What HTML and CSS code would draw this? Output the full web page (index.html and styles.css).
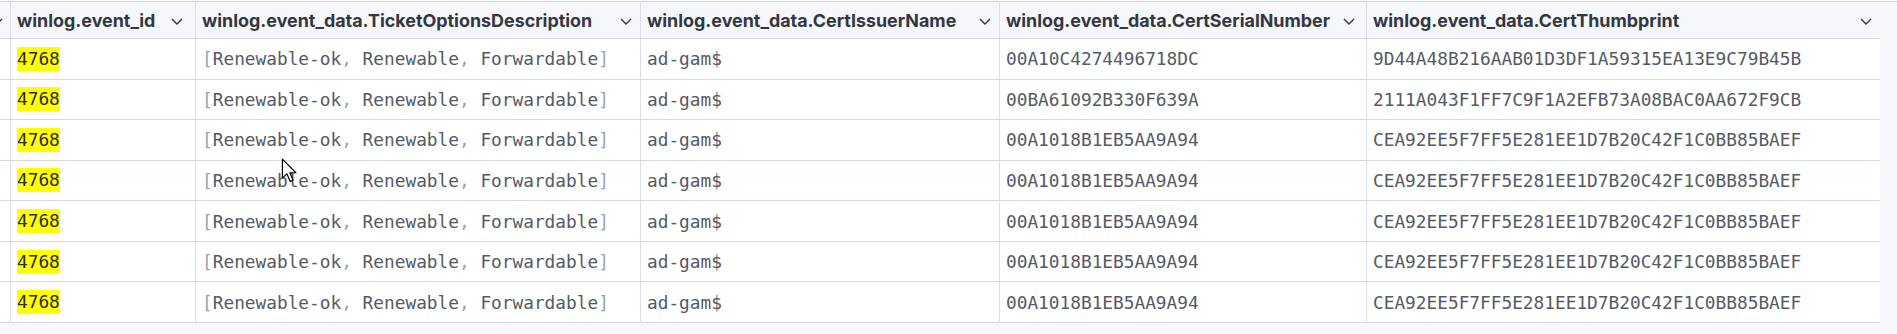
FILE: index.html
```html
<!DOCTYPE html>
<html lang="en">
<head>
<meta charset="utf-8">
<title>Data grid</title>
<link rel="stylesheet" href="styles.css">
</head>
<body>
<div class="wrap">
  <div class="grid">
    <div class="row head">
      <div class="cell c0"><svg class="chev chev-cut" viewBox="0 0 12 12"><path d="M1 4 L6 9 L11 4"/></svg></div>
      <div class="cell c1 hc pr12"><span class="title">winlog.event_id</span><svg class="chev" viewBox="0 0 12 12"><path d="M1 4 L6 9 L11 4"/></svg></div>
      <div class="cell c2 hc"><span class="title">winlog.event_data.TicketOptionsDescription</span><svg class="chev" viewBox="0 0 12 12"><path d="M1 4 L6 9 L11 4"/></svg></div>
      <div class="cell c3 hc"><span class="title">winlog.event_data.CertIssuerName</span><svg class="chev" viewBox="0 0 12 12"><path d="M1 4 L6 9 L11 4"/></svg></div>
      <div class="cell c4 hc pr11"><span class="title">winlog.event_data.CertSerialNumber</span><svg class="chev" viewBox="0 0 12 12"><path d="M1 4 L6 9 L11 4"/></svg></div>
      <div class="cell c5 hc"><span class="title">winlog.event_data.CertThumbprint</span><svg class="chev" viewBox="0 0 12 12"><path d="M1 4 L6 9 L11 4"/></svg></div>
    </div>

    <div class="row">
      <div class="cell c0"></div>
      <div class="cell c1"><mark class="hl">4768</mark></div>
      <div class="cell c2"><span class="val"><span class="punct">[</span>Renewable-ok<span class="punct">,</span> Renewable<span class="punct">,</span> Forwardable<span class="punct">]</span></span></div>
      <div class="cell c3"><span class="val">ad-gam$</span></div>
      <div class="cell c4"><span class="val">00A10C4274496718DC</span></div>
      <div class="cell c5"><span class="val">9D44A48B216AAB01D3DF1A59315EA13E9C79B45B</span></div>
    </div>
    <div class="row">
      <div class="cell c0"></div>
      <div class="cell c1"><mark class="hl">4768</mark></div>
      <div class="cell c2"><span class="val"><span class="punct">[</span>Renewable-ok<span class="punct">,</span> Renewable<span class="punct">,</span> Forwardable<span class="punct">]</span></span></div>
      <div class="cell c3"><span class="val">ad-gam$</span></div>
      <div class="cell c4"><span class="val">00BA61092B330F639A</span></div>
      <div class="cell c5"><span class="val">2111A043F1FF7C9F1A2EFB73A08BAC0AA672F9CB</span></div>
    </div>
    <div class="row">
      <div class="cell c0"></div>
      <div class="cell c1"><mark class="hl">4768</mark></div>
      <div class="cell c2"><span class="val"><span class="punct">[</span>Renewable-ok<span class="punct">,</span> Renewable<span class="punct">,</span> Forwardable<span class="punct">]</span></span></div>
      <div class="cell c3"><span class="val">ad-gam$</span></div>
      <div class="cell c4"><span class="val">00A1018B1EB5AA9A94</span></div>
      <div class="cell c5"><span class="val">CEA92EE5F7FF5E281EE1D7B20C42F1C0BB85BAEF</span></div>
    </div>
    <div class="row">
      <div class="cell c0"></div>
      <div class="cell c1"><mark class="hl">4768</mark></div>
      <div class="cell c2"><span class="val"><span class="punct">[</span>Renewable-ok<span class="punct">,</span> Renewable<span class="punct">,</span> Forwardable<span class="punct">]</span></span></div>
      <div class="cell c3"><span class="val">ad-gam$</span></div>
      <div class="cell c4"><span class="val">00A1018B1EB5AA9A94</span></div>
      <div class="cell c5"><span class="val">CEA92EE5F7FF5E281EE1D7B20C42F1C0BB85BAEF</span></div>
    </div>
    <div class="row">
      <div class="cell c0"></div>
      <div class="cell c1"><mark class="hl">4768</mark></div>
      <div class="cell c2"><span class="val"><span class="punct">[</span>Renewable-ok<span class="punct">,</span> Renewable<span class="punct">,</span> Forwardable<span class="punct">]</span></span></div>
      <div class="cell c3"><span class="val">ad-gam$</span></div>
      <div class="cell c4"><span class="val">00A1018B1EB5AA9A94</span></div>
      <div class="cell c5"><span class="val">CEA92EE5F7FF5E281EE1D7B20C42F1C0BB85BAEF</span></div>
    </div>
    <div class="row">
      <div class="cell c0"></div>
      <div class="cell c1"><mark class="hl">4768</mark></div>
      <div class="cell c2"><span class="val"><span class="punct">[</span>Renewable-ok<span class="punct">,</span> Renewable<span class="punct">,</span> Forwardable<span class="punct">]</span></span></div>
      <div class="cell c3"><span class="val">ad-gam$</span></div>
      <div class="cell c4"><span class="val">00A1018B1EB5AA9A94</span></div>
      <div class="cell c5"><span class="val">CEA92EE5F7FF5E281EE1D7B20C42F1C0BB85BAEF</span></div>
    </div>
    <div class="row">
      <div class="cell c0"></div>
      <div class="cell c1"><mark class="hl">4768</mark></div>
      <div class="cell c2"><span class="val"><span class="punct">[</span>Renewable-ok<span class="punct">,</span> Renewable<span class="punct">,</span> Forwardable<span class="punct">]</span></span></div>
      <div class="cell c3"><span class="val">ad-gam$</span></div>
      <div class="cell c4"><span class="val">00A1018B1EB5AA9A94</span></div>
      <div class="cell c5"><span class="val">CEA92EE5F7FF5E281EE1D7B20C42F1C0BB85BAEF</span></div>
    </div>
  </div>
  <svg class="cursor" viewBox="0 0 14 22" width="17" height="26"><path d="M1 1 L1 17 L4.8 13.4 L7.6 19.8 L10 18.8 L7.3 12.5 L12.4 12.5 Z"/></svg>
</div>
</body>
</html>
```

FILE: styles.css
```css
html, body {
  margin: 0;
  padding: 0;
}
body {
  background: #f7f8fb;
  padding-top: 1px;
  font-family: "Inter", "Noto Sans", sans-serif;
}
.wrap {
  position: relative;
  border-top: 1px solid #d3dae6;
  height: 332px;
}
.grid {
  width: 1880px;
  display: flex;
  flex-direction: column;
}
.row {
  display: flex;
  height: 40.57px;
  box-sizing: border-box;
  border-bottom: 1px solid #d3dae6;
  background: #ffffff;
}
.row.head {
  height: 37px;
  background: #f5f7fa;
}
.cell {
  box-sizing: border-box;
  border-right: 1px solid #d9dfea;
  display: flex;
  align-items: center;
  padding: 0 0 0 6px;
  overflow: hidden;
  white-space: nowrap;
  font-family: "DejaVu Sans Mono", "Liberation Mono", monospace;
  font-size: 17.8px;
  color: #555a64;
}
.val {
  white-space: pre;
}
.c0 { width: 11px; padding: 0; }
.c1 { width: 185px; }
.c2 { width: 445px; }
.c3 { width: 359px; }
.c4 { width: 367px; }
.c5 { width: 513px; border-right: none; }

.hc {
  justify-content: space-between;
  padding-right: 8px;
}
.hc.pr12 { padding-right: 12px; }
.hc.pr11 { padding-right: 11px; }
.title {
  font-family: "Inter", "Noto Sans", sans-serif;
  font-weight: 700;
  font-size: 17.9px;
  color: #343741;
  letter-spacing: 0;
}
.chev {
  width: 12px;
  height: 12px;
  flex: none;
  margin-top: 2px;
}
.chev path {
  fill: none;
  stroke: #343741;
  stroke-width: 1.4;
}
.chev-cut {
  margin-left: -9px;
}
.hl {
  display: inline-block;
  background: #ffff00;
  color: #2b2d33;
  height: 24px;
  line-height: 24px;
  padding: 0;
}
.punct {
  color: #98a2b3;
}
.cursor {
  position: absolute;
  left: 281px;
  top: 156px;
}
.cursor path {
  fill: #ffffff;
  stroke: #000000;
  stroke-width: 1;
  stroke-linejoin: round;
}
```
